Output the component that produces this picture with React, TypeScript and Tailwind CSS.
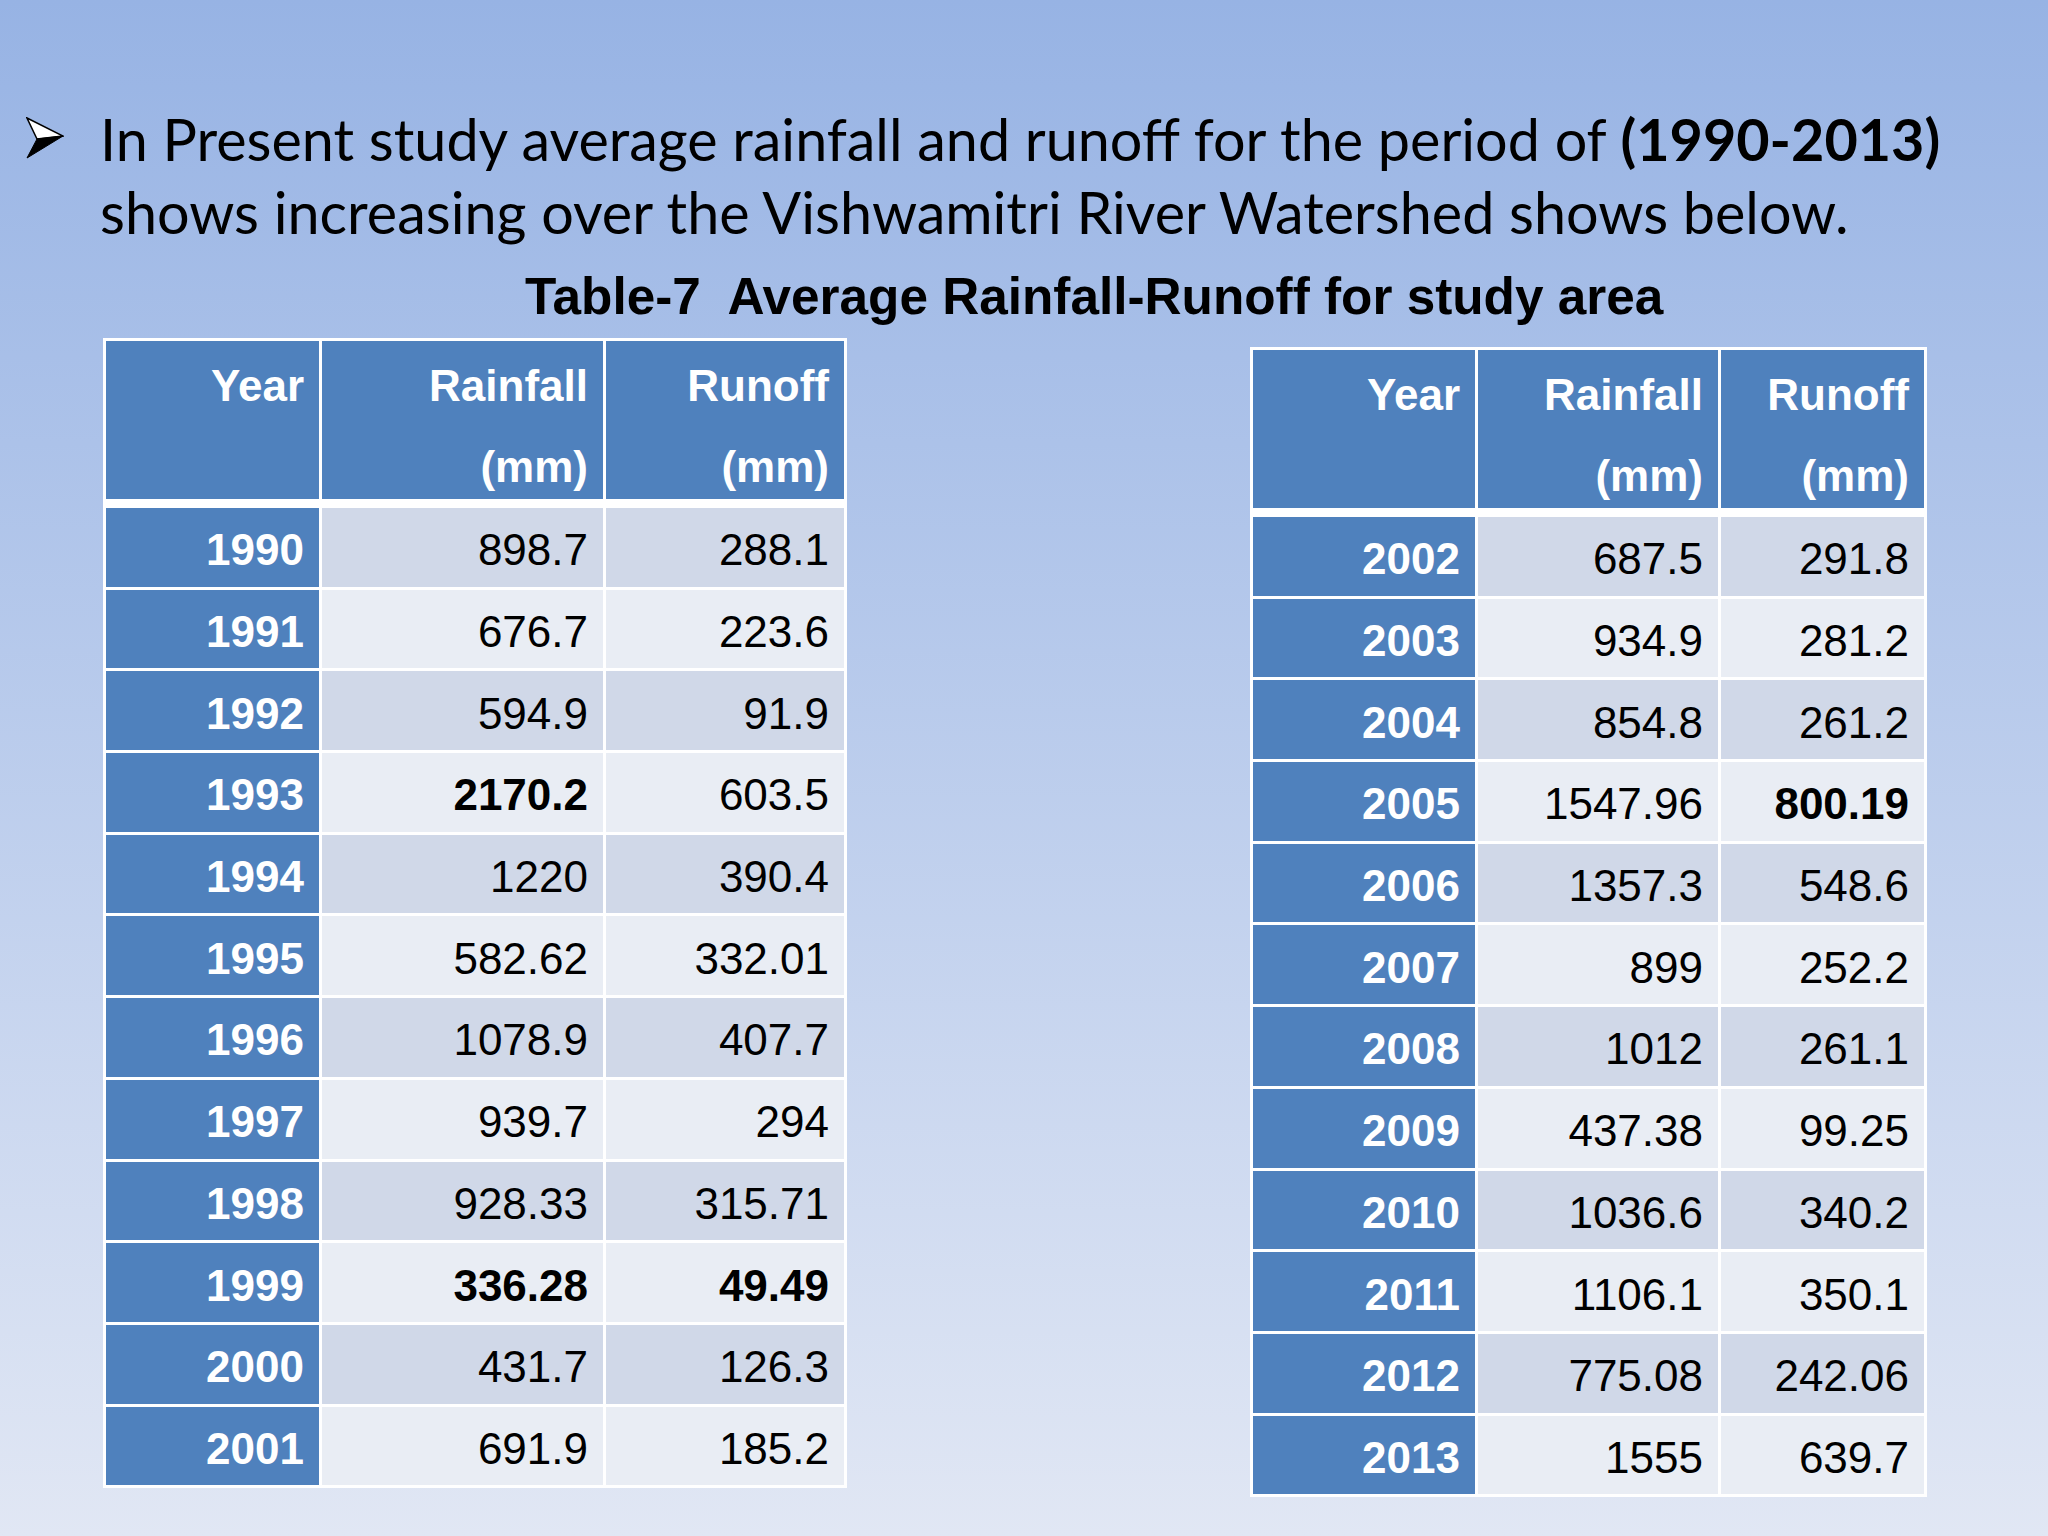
import React from "react";

type Row = { year: string; rain: string; run: string; boldRain?: boolean; boldRun?: boolean };

const leftRows: Row[] = [
  { year: "1990", rain: "898.7", run: "288.1" },
  { year: "1991", rain: "676.7", run: "223.6" },
  { year: "1992", rain: "594.9", run: "91.9" },
  { year: "1993", rain: "2170.2", run: "603.5", boldRain: true },
  { year: "1994", rain: "1220", run: "390.4" },
  { year: "1995", rain: "582.62", run: "332.01" },
  { year: "1996", rain: "1078.9", run: "407.7" },
  { year: "1997", rain: "939.7", run: "294" },
  { year: "1998", rain: "928.33", run: "315.71" },
  { year: "1999", rain: "336.28", run: "49.49", boldRain: true, boldRun: true },
  { year: "2000", rain: "431.7", run: "126.3" },
  { year: "2001", rain: "691.9", run: "185.2" },
];

const rightRows: Row[] = [
  { year: "2002", rain: "687.5", run: "291.8" },
  { year: "2003", rain: "934.9", run: "281.2" },
  { year: "2004", rain: "854.8", run: "261.2" },
  { year: "2005", rain: "1547.96", run: "800.19", boldRun: true },
  { year: "2006", rain: "1357.3", run: "548.6" },
  { year: "2007", rain: "899", run: "252.2" },
  { year: "2008", rain: "1012", run: "261.1" },
  { year: "2009", rain: "437.38", run: "99.25" },
  { year: "2010", rain: "1036.6", run: "340.2" },
  { year: "2011", rain: "1106.1", run: "350.1" },
  { year: "2012", rain: "775.08", run: "242.06" },
  { year: "2013", rain: "1555", run: "639.7" },
];

function Arrow() {
  return (
    <svg width="38" height="42" viewBox="0 0 38 42" className="mt-[15px] ml-[26px] shrink-0">
      <polygon points="1,1 37,19 11,22" fill="white" stroke="black" strokeWidth="1.5" strokeLinejoin="miter" />
      <polygon points="11,22 37,19 1,41" fill="black" stroke="black" strokeWidth="1" />
    </svg>
  );
}

function HeadCell({ a, b }: { a: string; b?: string }) {
  return (
    <div className="h-[158px] bg-[#4f81bd] pt-[4px] pr-[15px] text-right text-[44px] font-bold leading-[81px] text-white">
      <div>{a}</div>
      {b && <div>{b}</div>}
    </div>
  );
}

function DataTable({ rows, cols }: { rows: Row[]; cols: string }) {
  return (
    <div className="bg-white p-[3px] font-['Liberation_Sans',Arial,sans-serif]">
      <div className={`grid gap-[3px] ${cols}`}>
        <HeadCell a="Year" />
        <HeadCell a="Rainfall" b="(mm)" />
        <HeadCell a="Runoff" b="(mm)" />
      </div>
      <div className={`mt-[9px] grid gap-[3px] ${cols}`}>
        {rows.map((r, i) => {
          const bg = i % 2 === 0 ? "bg-[#d0d8e8]" : "bg-[#e9edf4]";
          return (
            <React.Fragment key={r.year}>
              <div className="flex h-[78.7px] items-center justify-end bg-[#4f81bd] pt-[6px] pr-[15px] text-[44px] font-bold text-white">
                {r.year}
              </div>
              <div className={`flex h-[78.7px] items-center justify-end pt-[6px] pr-[15px] text-[44px] text-black ${bg} ${r.boldRain ? "font-bold" : ""}`}>
                {r.rain}
              </div>
              <div className={`flex h-[78.7px] items-center justify-end pt-[6px] pr-[15px] text-[44px] text-black ${bg} ${r.boldRun ? "font-bold" : ""}`}>
                {r.run}
              </div>
            </React.Fragment>
          );
        })}
      </div>
    </div>
  );
}

export default function App() {
  return (
    <div className="flex h-[1536px] w-[2048px] flex-col overflow-hidden bg-linear-to-b from-[#97b3e4] to-[#e1e7f4]">
      <div className="mt-[102px] flex items-start">
        <Arrow />
        <p className="ml-[36px] font-['Lato',sans-serif] text-[57.5px] leading-[73px] text-black">
          In Present study average rainfall and runoff for the period of <b>(1990-2013)</b>
          <br />
          shows increasing over the Vishwamitri River Watershed shows below.
        </p>
      </div>
      <h1 className="mt-[19px] ml-[525px] font-['Liberation_Sans',Arial,sans-serif] text-[51.3px] leading-[60px] font-bold whitespace-pre text-black">
        {"Table-7  Average Rainfall-Runoff for study area"}
      </h1>
      <div className="mt-[11px] flex items-start">
        <div className="ml-[103px]">
          <DataTable rows={leftRows} cols="grid-cols-[213px_281px_238px]" />
        </div>
        <div className="mt-[9px] ml-[403px]">
          <DataTable rows={rightRows} cols="grid-cols-[222px_240px_203px]" />
        </div>
      </div>
    </div>
  );
}
